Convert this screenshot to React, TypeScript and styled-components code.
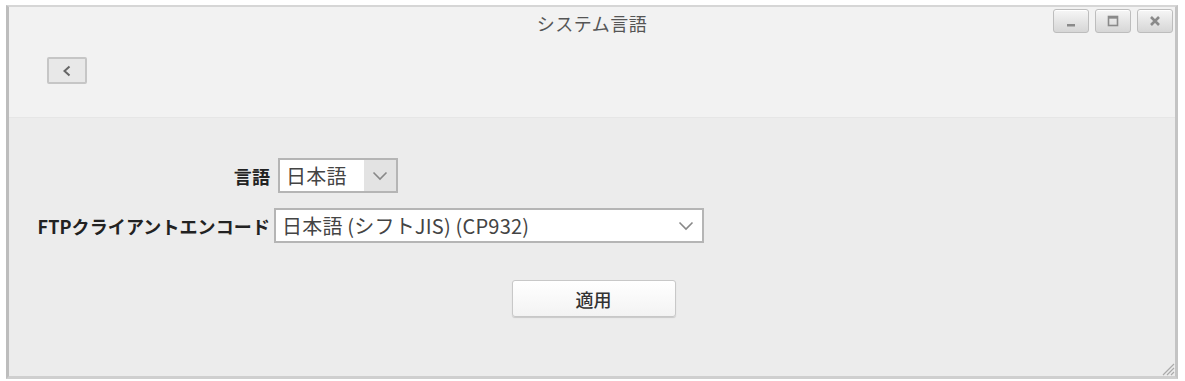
import React from "react";
import styled, { createGlobalStyle } from "styled-components";

const Global = createGlobalStyle`
  html, body { margin: 0; padding: 0; background: #ffffff; }
  body { font-family: "Noto Sans CJK JP", "Liberation Sans", sans-serif; }
`;

const Page = styled.div`
  width: 1185px;
  height: 381px;
  padding: 5px 7px 2px 6px;
  box-sizing: border-box;
`;

const Window = styled.div`
  position: relative;
  height: 100%;
  box-sizing: border-box;
  border-left: 3px solid #bdbdbd;
  border-right: 3px solid #c4c4c4;
  border-top: 2px solid #d6d6d6;
  border-bottom: 3px solid #cfcfcf;
  background: #ececec;
  display: flex;
  flex-direction: column;
`;

const Header = styled.div`
  height: 111px;
  background: #f2f2f2;
  border-bottom: 1px solid #e6e6e6;
  display: flex;
  flex-direction: column;
  box-sizing: border-box;
`;

const TitleRow = styled.div`
  height: 37px;
  display: grid;
  grid-template-columns: 1fr auto 1fr;
  align-items: start;
`;

const Title = styled.div`
  grid-column: 2;
  font-size: 18px;
  color: #555;
  line-height: 22px;
  padding-top: 5px;
  letter-spacing: 0.5px;
`;

const WinButtons = styled.div`
  grid-column: 3;
  justify-self: end;
  display: flex;
  gap: 6px;
  padding: 2px 2px 0 0;
`;

const WinBtn = styled.div`
  width: 36px;
  height: 24px;
  box-sizing: border-box;
  border: 1px solid #bdbdbd;
  border-radius: 3px;
  background: linear-gradient(#f6f6f6, #d6d6d6);
  box-shadow: inset 0 1px 0 #fff;
  display: flex;
  align-items: center;
  justify-content: center;
`;

const BackRow = styled.div`
  padding: 13px 0 0 38px;
`;

const BackBtn = styled.div`
  width: 40px;
  height: 27px;
  box-sizing: border-box;
  border: 2px solid #c6c6c6;
  border-radius: 2px;
  background: #e8e8e8;
  display: flex;
  align-items: center;
  justify-content: center;
`;

const Body = styled.div`
  flex: 1;
  display: flex;
  flex-direction: column;
  padding-top: 40px;
`;

const Form = styled.div`
  display: grid;
  grid-template-columns: 261px auto;
  column-gap: 7px;
  row-gap: 15px;
  align-items: center;
`;

const Label = styled.div`
  justify-self: end;
  font-weight: bold;
  font-size: 18px;
  color: #222;
  white-space: nowrap;
  letter-spacing: 0.1px;
`;

const Select = styled.div<{ $w: number; $ml?: number }>`
  width: ${(p) => p.$w}px;
  height: 35px;
  margin-left: ${(p) => p.$ml ?? 0}px;
  box-sizing: border-box;
  border: 2px solid #b5b5b5;
  background: #fff;
  display: flex;
  align-items: stretch;
`;

const SelectText = styled.div`
  flex: 1;
  display: flex;
  align-items: center;
  padding-left: 6px;
  font-size: 20px;
  color: #444;
  white-space: nowrap;
  letter-spacing: 0.2px;
`;

const Arrow = styled.div<{ $gray?: boolean }>`
  width: 32px;
  display: flex;
  align-items: center;
  justify-content: center;
  background: ${(p) => (p.$gray ? "#e3e3e3" : "#fff")};
`;

const ApplyRow = styled.div`
  display: flex;
  justify-content: center;
  padding: 37px 0 0 3px;
`;

const ApplyBtn = styled.div`
  width: 164px;
  height: 37px;
  box-sizing: border-box;
  border: 1px solid #c8c8c8;
  border-radius: 3px;
  background: linear-gradient(#ffffff, #f3f3f3);
  box-shadow: 0 1px 1px rgba(0,0,0,0.15);
  display: flex;
  align-items: center;
  justify-content: center;
  font-size: 18px;
  font-weight: 500;
  color: #333;
`;

const Grip = styled.svg`
  position: absolute;
  right: 0;
  bottom: 0;
`;

const Chevron = () => (
  <svg width="16" height="10" viewBox="0 0 16 10">
    <path d="M1.5 1.5 L8 8 L14.5 1.5" fill="none" stroke="#888" strokeWidth="1.6" />
  </svg>
);

export default function App() {
  return (
    <>
      <Global />
      <Page>
        <Window>
          <Header>
            <TitleRow>
              <Title>システム言語</Title>
              <WinButtons>
                <WinBtn>
                  <svg width="16" height="16" viewBox="0 0 16 16">
                    <rect x="4" y="11" width="8" height="2.5" fill="#8a8a8a" />
                  </svg>
                </WinBtn>
                <WinBtn>
                  <svg width="16" height="16" viewBox="0 0 16 16">
                    <rect x="3.5" y="3.5" width="9" height="9" fill="none" stroke="#8a8a8a" strokeWidth="1.6" />
                    <rect x="3.5" y="3.5" width="9" height="2.2" fill="#8a8a8a" />
                  </svg>
                </WinBtn>
                <WinBtn>
                  <svg width="16" height="16" viewBox="0 0 16 16">
                    <path d="M4 4 L12 12 M12 4 L4 12" stroke="#8a8a8a" strokeWidth="2.6" />
                  </svg>
                </WinBtn>
              </WinButtons>
            </TitleRow>
            <BackRow>
              <BackBtn>
                <svg width="10" height="12" viewBox="0 0 10 12">
                  <path d="M7.5 1.5 L2.5 6 L7.5 10.5" fill="none" stroke="#666" strokeWidth="2" />
                </svg>
              </BackBtn>
            </BackRow>
          </Header>
          <Body>
            <Form>
              <Label>言語</Label>
              <Select $w={120} $ml={1}>
                <SelectText>日本語</SelectText>
                <Arrow $gray>
                  <Chevron />
                </Arrow>
              </Select>
              <Label>FTPクライアントエンコード</Label>
              <Select $w={430} $ml={-3}>
                <SelectText>日本語 (シフトJIS) (CP932)</SelectText>
                <Arrow>
                  <Chevron />
                </Arrow>
              </Select>
            </Form>
            <ApplyRow>
              <ApplyBtn>適用</ApplyBtn>
            </ApplyRow>
          </Body>
          <Grip width="16" height="16" viewBox="0 0 16 16">
            <path d="M15 4 L4 15 M15 8 L8 15 M15 12 L12 15" stroke="#aaa" strokeWidth="1.2" />
          </Grip>
        </Window>
      </Page>
    </>
  );
}
